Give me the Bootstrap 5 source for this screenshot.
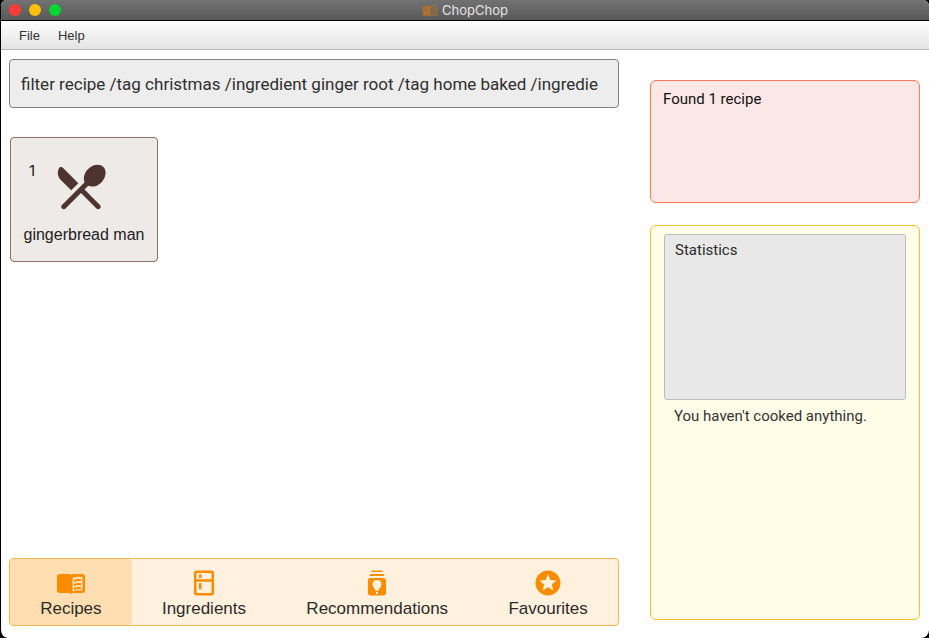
<!DOCTYPE html>
<html lang="en">
<head>
<meta charset="utf-8">
<meta name="viewport" content="width=device-width, initial-scale=1">
<title>ChopChop</title>
<link href="https://cdn.jsdelivr.net/npm/bootstrap@5.3.0/dist/css/bootstrap.min.css" rel="stylesheet">
<style>
  html { background: #000; }
  body { background: transparent; font-family: "Liberation Sans", Arial, sans-serif; font-size: 16px; line-height: 20px; color: #2b2b2b; }
  .app-window { background: #fff; border-left: 1px solid #000; border-radius: 6px 6px 8px 8px; overflow: hidden; }
  .title-bar { height: 21px; background: linear-gradient(#727272, #595959); border-bottom: 1px solid #000; }
  .dots { position: absolute; left: 8px; }
  .dot { width: 12px; height: 12px; border-radius: 50%; }
  .dot-close { background: #ff3b38; }
  .dot-min { background: #ffc107; }
  .dot-max { background: #00d733; }
  .app-name { font-family: Inter, sans-serif; font-size: 13px; color: #e4e4e4; }
  .menu-strip { height: 29px; background: linear-gradient(#fdfdfd, #e4e4e4); border-bottom: 1px solid #b4b4b4; padding: 2px 18px 0; gap: 18px; }
  .menu-strip button { font-size: 13px; line-height: 16px; color: #333; }
  .workspace { display: grid; grid-template-columns: minmax(0, 610fr) minmax(0, 270fr); gap: 31px; padding: 9px 9px 12px 8px; }
  .command { height: 49px; background: #ededed; border: 1px solid #7f7f7f; border-radius: 4px; padding: 0 11px; font-family: Roboto, sans-serif; font-size: 17px; color: #2f2f2f; text-overflow: clip; }
  .command:focus { background: #ededed; }
  .recipe { width: 148px; background: #eeeae8; border: 1px solid #8d6e63; border-radius: 4px; margin: 29px 0 0 1px; padding: 19px 8px 16px; color: #222; }
  .recipe-no { width: 28px; padding: 4px 0 0 10px; font-family: Inter, sans-serif; font-size: 15px; }
  .tabs { background: #fff1de; border: 1px solid #ffb74d; border-radius: 4px; overflow: hidden; font-size: 17px; }
  .tabs button { flex: 1 1 auto; gap: 1px; padding: 9px 16px 6px; color: #2b2b2b; }
  .tabs button.active { background: #ffdfb1; border-radius: 0 4px 4px 0; }
  .tabs svg { fill: #fb8c00; }
  .side { padding: 21px 0 6px; gap: 22px; font-family: Roboto, sans-serif; font-size: 15px; }
  .result { min-height: 123px; background: #fbe8e6; border: 1px solid #ff7a55; border-radius: 6px; padding: 8px 12px; color: #111; }
  .stats { background: #fffde7; border: 1px solid #fbc02d; border-radius: 6px; padding: 8px 13px; }
  .stats-box { height: 166px; background: #e8e8e8; border: 1px solid #bdbdbd; border-radius: 3px; padding: 5px 10px; }
  .stats p { padding: 6px 10px; color: #333; }
</style>
<script src="https://cdn.jsdelivr.net/npm/bootstrap@5.3.0/dist/js/bootstrap.bundle.min.js"></script>
</head>
<body>
<svg class="d-none" aria-hidden="true">
  <symbol id="book" viewBox="0 0 30 22">
    <path fill-rule="evenodd" d="M4 2H12Q14 2 15 3Q16 2 18 2H26Q29 2 29 5V18Q29 21 26 21H18Q16 21 15 22Q14 21 12 21H4Q1 21 1 18V5Q1 2 4 2ZM16.500 6V19.500Q21 17.800 26.500 18.500V5Q21 4 16.500 6Z"/>
    <path d="M18 8Q21.500 6.600 25 7.200V9.200Q21.500 8.600 18 10ZM18 12Q21.500 10.600 25 11.200V13.200Q21.500 12.600 18 14ZM18 16Q21.500 14.600 25 15.200V17.200Q21.500 16.600 18 18Z"/>
  </symbol>
</svg>
<div class="app-window d-flex flex-column min-vh-100">
  <header class="title-bar d-flex align-items-center justify-content-center position-relative">
    <div class="dots d-flex gap-2" aria-hidden="true">
      <span class="dot dot-close"></span><span class="dot dot-min"></span><span class="dot dot-max"></span>
    </div>
    <svg class="me-1" width="16" height="13" fill="#a56f35" aria-hidden="true"><use href="#book"/></svg>
    <span class="app-name">ChopChop</span>
  </header>
  <nav class="menu-strip d-flex align-items-center" aria-label="Application menu">
    <button type="button" class="border-0 bg-transparent p-0">File</button>
    <button type="button" class="border-0 bg-transparent p-0">Help</button>
  </nav>
  <main class="workspace flex-grow-1">
    <section class="d-flex flex-column">
      <input type="text" class="form-control shadow-none command" aria-label="Command" value="filter recipe /tag christmas /ingredient ginger root /tag home baked /ingredie">
      <article class="recipe">
        <div class="d-flex mb-2">
          <span class="recipe-no">1</span>
          <svg class="ms-1" width="60" height="60" viewBox="0 0 24 24" fill="#4e342e" aria-hidden="true"><path d="M8.100 13.340l2.830-2.830-6.190-6.180c-.48-.48-1.310-.35-1.610.27-.71 1.490-.45 3.320.78 4.560l4.190 4.180zm6.780-1.810c1.530.71 3.680.21 5.270-1.380 1.910-1.910 2.280-4.650.81-6.120-1.460-1.460-4.200-1.100-6.120.81-1.590 1.590-2.090 3.740-1.380 5.270L4.400 19.170c-.39.39-.39 1.020 0 1.410.39.39 1.020.39 1.410 0L12 14.410l6.180 6.180c.39.39 1.020.39 1.410 0 .39-.39.39-1.020 0-1.410L13.410 13l1.470-1.470z"/></svg>
        </div>
        <div class="text-center">gingerbread man</div>
      </article>
      <nav class="tabs d-flex mt-auto" aria-label="Views">
        <button type="button" class="active border-0 d-flex flex-column align-items-center" aria-current="page">
          <svg width="30" height="30" aria-hidden="true"><use href="#book"/></svg>Recipes
        </button>
        <button type="button" class="border-0 bg-transparent d-flex flex-column align-items-center">
          <svg width="30" height="30" viewBox="0 0 24 24" aria-hidden="true"><path d="M18 2.010L6 2c-1.100 0-2 .89-2 2v16c0 1.100.9 2 2 2h12c1.100 0 2-.9 2-2V4c0-1.100-.9-1.990-2-1.990zM18 20H6v-9.020h12V20zm0-11H6V4h12v5zM8 5h2v3H8zm0 7h2v5H8z"/></svg>Ingredients
        </button>
        <button type="button" class="border-0 bg-transparent d-flex flex-column align-items-center">
          <svg width="30" height="30" viewBox="0 0 30 30" aria-hidden="true"><path fill-rule="evenodd" d="M10 2.500H20L21 4H9ZM8.500 6H21.500L22.500 8H7.500ZM8.500 10H21.500Q24 10 24 12.500V25Q24 27.500 21.500 27.500H8.500Q6 27.500 6 25V12.500Q6 10 8.500 10ZM15 12Q10.500 12 10.500 16.500Q10.500 18.500 13.500 22V23H16.500V22Q19.500 18.500 19.500 16.500Q19.500 12 15 12ZM14 24V26H16V24Z"/></svg>Recommendations
        </button>
        <button type="button" class="border-0 bg-transparent d-flex flex-column align-items-center">
          <svg width="30" height="30" viewBox="0 0 24 24" aria-hidden="true"><path d="M11.990 2C6.470 2 2 6.480 2 12s4.470 10 9.990 10C17.520 22 22 17.520 22 12S17.520 2 11.990 2zm4.240 16L12 15.450 7.770 18l1.120-4.810-3.730-3.230 4.920-.42L12 5l1.920 4.530 4.920.42-3.730 3.230L16.230 18z"/></svg>Favourites
        </button>
      </nav>
    </section>
    <aside class="side d-flex flex-column">
      <div class="result" role="status">Found 1 recipe</div>
      <section class="stats flex-grow-1">
        <div class="stats-box">Statistics</div>
        <p class="mb-0">You haven't cooked anything.</p>
      </section>
    </aside>
  </main>
</div>
</body>
</html>
